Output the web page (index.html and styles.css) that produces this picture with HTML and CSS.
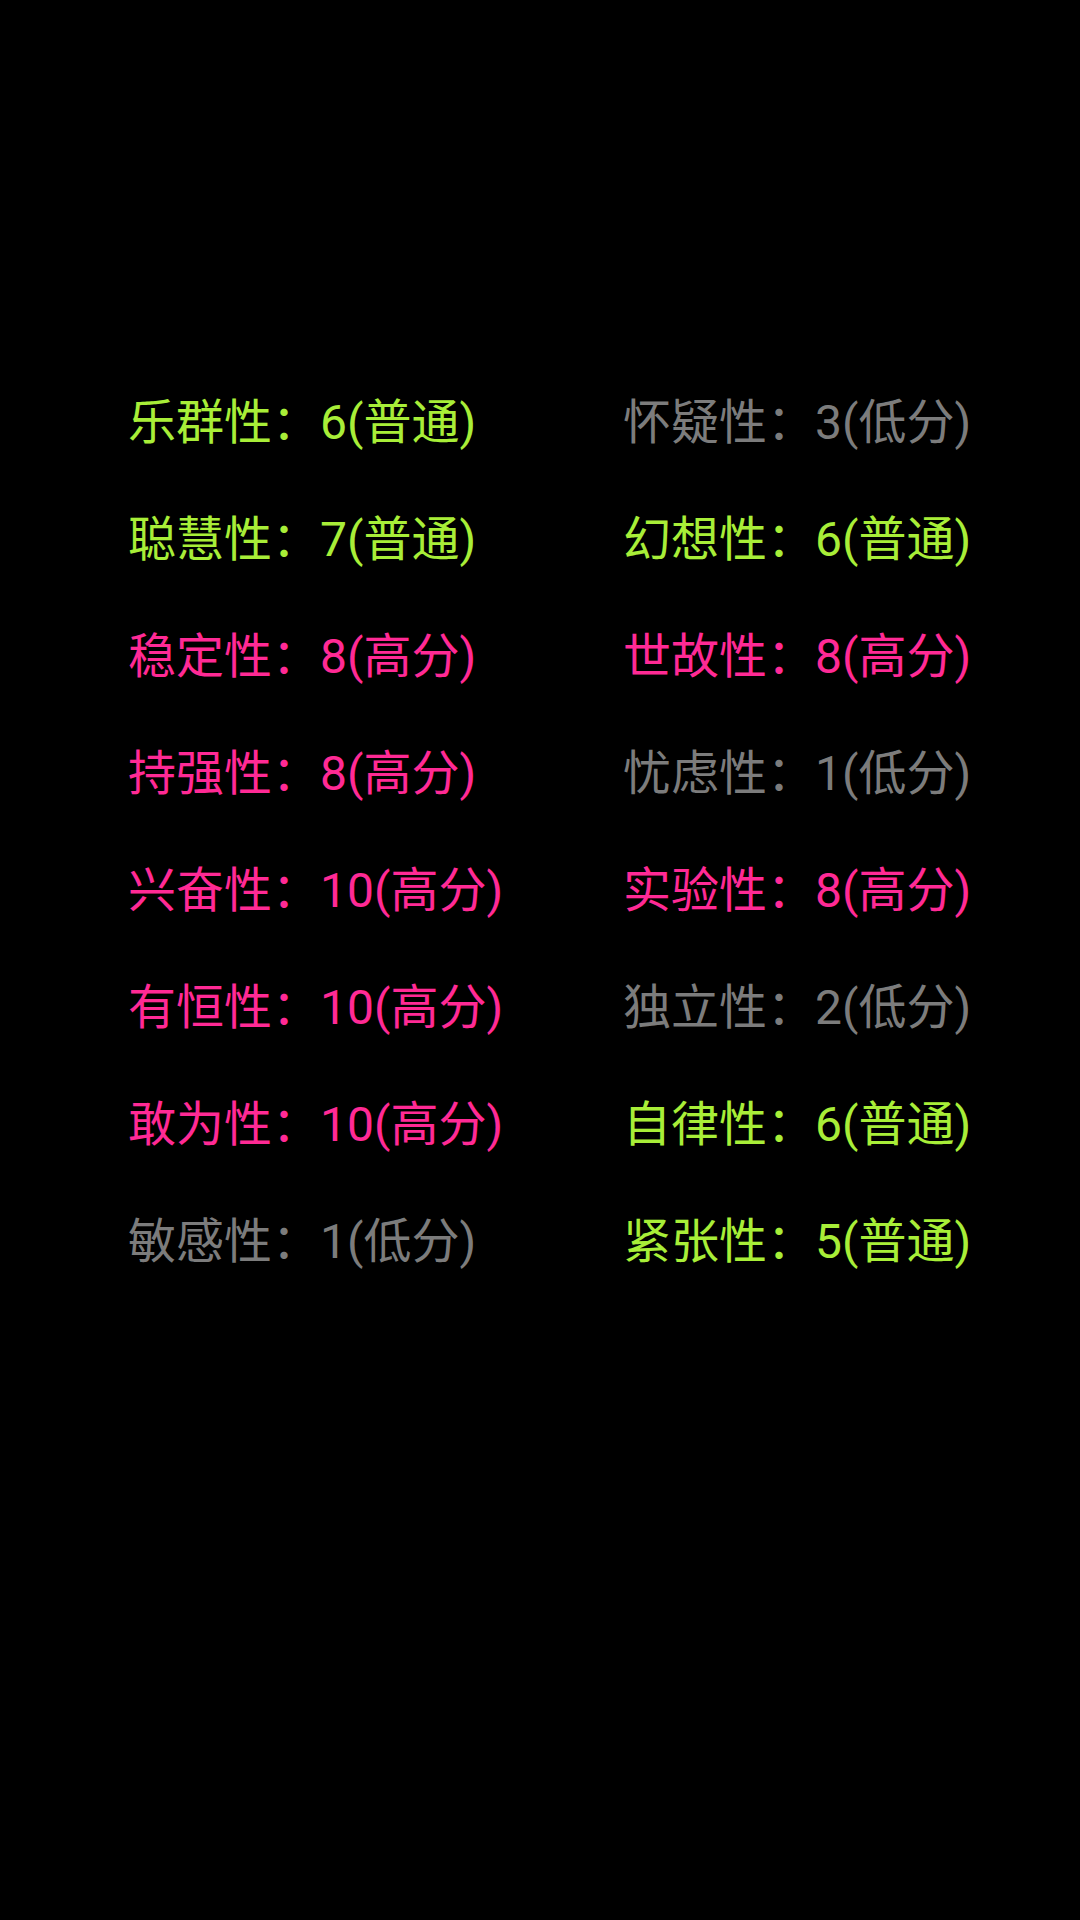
FILE: index.html
```html
<!DOCTYPE html>
<html lang="zh-CN">
<head>
<meta charset="utf-8">
<link rel="stylesheet" href="styles.css">
</head>
<body>
<div class="grid">
  <div class="item mid">乐群性：6(普通)</div>
  <div class="item low">怀疑性：3(低分)</div>
  <div class="item mid">聪慧性：7(普通)</div>
  <div class="item mid">幻想性：6(普通)</div>
  <div class="item high">稳定性：8(高分)</div>
  <div class="item high">世故性：8(高分)</div>
  <div class="item high">持强性：8(高分)</div>
  <div class="item low">忧虑性：1(低分)</div>
  <div class="item high">兴奋性：10(高分)</div>
  <div class="item high">实验性：8(高分)</div>
  <div class="item high">有恒性：10(高分)</div>
  <div class="item low">独立性：2(低分)</div>
  <div class="item high">敢为性：10(高分)</div>
  <div class="item mid">自律性：6(普通)</div>
  <div class="item low">敏感性：1(低分)</div>
  <div class="item mid">紧张性：5(普通)</div>
</div>
</body>
</html>
```

FILE: styles.css
```css
html, body {
  margin: 0;
  padding: 0;
  background: #000;
  width: 1080px;
  height: 1920px;
}
.grid {
  display: grid;
  grid-template-columns: 495px 1fr;
  padding: 364px 0 0 128px;
}
.item {
  font-family: Roboto, "Noto Sans CJK SC", sans-serif;
  font-size: 48px;
  line-height: 117px;
  height: 117px;
  white-space: nowrap;
}
.mid { color: #a8ee38; }
.high { color: #ff2a95; }
.low { color: #7c7c7c; }
```
